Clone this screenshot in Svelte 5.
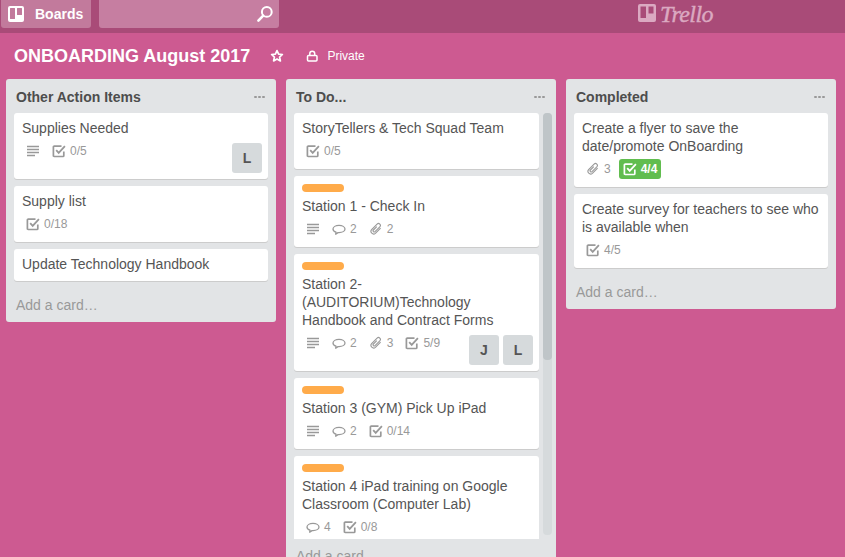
<script>
  const lists = [
    {
      title: "Other Action Items",
      cards: [
        { title: "Supplies Needed", desc: true, check: "0/5", members: ["L"] },
        { title: "Supply list", check: "0/18" },
        { title: "Update Technology Handbook" }
      ]
    },
    {
      title: "To Do...",
      scroll: true,
      cards: [
        { title: "StoryTellers & Tech Squad Team", check: "0/5" },
        { title: "Station 1 - Check In", label: true, desc: true, comments: 2, attach: 2 },
        { title: "Station 2- (AUDITORIUM)Technology Handbook and Contract Forms", label: true, desc: true, comments: 2, attach: 3, check: "5/9", members: ["J", "L"] },
        { title: "Station 3 (GYM) Pick Up iPad", label: true, desc: true, comments: 2, check: "0/14" },
        { title: "Station 4 iPad training on Google Classroom (Computer Lab)", label: true, comments: 4, check: "0/8" }
      ]
    },
    {
      title: "Completed",
      cards: [
        { title: "Create a flyer to save the date/promote OnBoarding", attach: 3, check: "4/4", done: true },
        { title: "Create survey for teachers to see who is available when", check: "4/5" }
      ]
    }
  ];
</script>

{#snippet checkIcon()}
  <svg class="icon" viewBox="0 0 14 14" width="14" height="14">
    <path d="M11.800 7.500v4.200a.8.8 0 0 1-.8.8H2.200a.8.8 0 0 1-.8-.8V3a.8.8 0 0 1 .8-.8h7.300" fill="none" stroke="currentColor" stroke-width="1.700" />
    <path d="M4.200 6.200l2.500 2.700 6.200-6.700" fill="none" stroke="currentColor" stroke-width="1.800" />
  </svg>
{/snippet}

{#snippet clipIcon()}
  <svg class="icon" viewBox="0 0 14 14" width="14" height="14">
    <path d="M7.800 4.600L4.400 8a1.100 1.100 0 0 0 1.600 1.600L10.800 4.800a1.900 1.900 0 0 0-2.700-2.700L2.600 7.600a2.700 2.700 0 0 0 3.800 3.800L11.600 6.200" fill="none" stroke="currentColor" stroke-width="1.100" />
  </svg>
{/snippet}

<div class="page">
  <header class="topbar">
    <button class="boards">
      <svg viewBox="0 0 16 16" width="16" height="16">
        <path fill-rule="evenodd" d="M2 0h12a2 2 0 0 1 2 2v12a2 2 0 0 1-2 2H2a2 2 0 0 1-2-2V2a2 2 0 0 1 2-2zm.5 2a.5.5 0 0 0-.5.5v10a.5.5 0 0 0 .5.5h4a.5.5 0 0 0 .5-.5v-10a.5.5 0 0 0-.5-.5zm7 0a.5.5 0 0 0-.5.5v6a.5.5 0 0 0 .5.5h4a.5.5 0 0 0 .5-.5v-6a.5.5 0 0 0-.5-.5z" fill="#fff" />
      </svg>
      <span>Boards</span>
    </button>
    <div class="search">
      <svg viewBox="0 0 18 18" width="18" height="18">
        <circle cx="10.800" cy="6.900" r="4.900" fill="none" stroke="#fff" stroke-width="2" />
        <path d="M7.200 10.600L2.400 15.600" stroke="#fff" stroke-width="2.600" stroke-linecap="round" />
      </svg>
    </div>
    <div class="logo">
      <svg viewBox="0 0 18 18" width="18" height="18">
        <path fill-rule="evenodd" d="M2 0h14a2 2 0 0 1 2 2v14a2 2 0 0 1-2 2H2a2 2 0 0 1-2-2V2a2 2 0 0 1 2-2zm.5 2.500v11.500h5.500V2.500zm8 0v7h5V2.500z" fill="currentColor" />
      </svg>
      <span>Trello</span>
    </div>
  </header>

  <div class="boardhead">
    <h1>ONBOARDING August 2017</h1>
    <svg class="star" viewBox="0 0 14 14" width="14" height="14">
      <path d="M7 1.600l1.600 3.500 3.800.4-2.800 2.600.8 3.800L7 10l-3.400 1.900.8-3.800L1.600 5.500l3.800-.4z" fill="none" stroke="#fff" stroke-width="1.700" stroke-linejoin="round" />
    </svg>
    <svg class="lock" viewBox="0 0 14 14" width="14" height="14">
      <rect x="3.500" y="6.500" width="9.500" height="5.500" rx="1" fill="none" stroke="#fff" stroke-width="1.500" />
      <path d="M5.800 6.500V4.600a2.400 2.400 0 0 1 4.900 0V6.500" fill="none" stroke="#fff" stroke-width="1.500" />
    </svg>
    <span class="private">Private</span>
  </div>

  <main class="board">
    {#each lists as list}
      <section class="list" class:tall={list.scroll}>
        <div class="listhead">
          <h2>{list.title}</h2>
          <span class="dots"><i></i><i></i><i></i></span>
        </div>
        <div class="cards" class:scroll={list.scroll}>
          {#each list.cards as card}
            <article class="card">
              {#if card.label}<div class="label"></div>{/if}
              <div class="title">{card.title}</div>
              {#if card.desc || card.check || card.attach || card.comments || card.members}
                <div class="foot">
                  <div class="badges">
                    {#if card.desc}
                      <span class="badge">
                        <svg class="icon" viewBox="0 0 14 14" width="14" height="14">
                          <path d="M1 2.500h12M1 5.500h12M1 8.500h12M1 11.500h8" stroke="currentColor" stroke-width="1.400" />
                        </svg>
                      </span>
                    {/if}
                    {#if card.comments}
                      <span class="badge">
                        <svg class="icon" viewBox="0 0 14 14" width="14" height="14">
                          <path d="M4 10.200C2.300 9.700 1 8.500 1 7c0-2 2.600-3.600 6-3.600S13 5 13 7s-2.600 3.600-6 3.600c-.4 0-.7 0-1 0L3.700 12.200z" fill="none" stroke="currentColor" stroke-width="1.300" stroke-linejoin="round" />
                        </svg>
                        {card.comments}
                      </span>
                    {/if}
                    {#if card.attach}
                      <span class="badge">{@render clipIcon()}{card.attach}</span>
                    {/if}
                    {#if card.check}
                      <span class="badge" class:done={card.done}>{@render checkIcon()}{card.check}</span>
                    {/if}
                  </div>
                  {#if card.members}
                    <div class="members">
                      {#each card.members as m}<span class="member">{m}</span>{/each}
                    </div>
                  {/if}
                </div>
              {/if}
            </article>
          {/each}
        </div>
        <div class="addcard">Add a card…</div>
      </section>
    {/each}
  </main>
</div>

<style>
  :global(body) {
    margin: 0;
    background: #cd5a91;
    overflow: hidden;
  }
  .page {
    width: 845px;
    height: 557px;
    overflow: hidden;
    font-family: "Liberation Sans", Arial, sans-serif;
    font-size: 14px;
    line-height: 18px;
    color: #555;
    background: #cd5a91;
  }
  .topbar {
    height: 33px;
    box-sizing: border-box;
    background: #a94b78;
    display: flex;
    align-items: flex-start;
    padding-left: 1px;
    position: relative;
  }
  .boards {
    width: 90px;
    height: 28px;
    border: 0;
    border-radius: 0 0 3px 3px;
    background: #c27a9c;
    display: flex;
    align-items: center;
    padding: 0 0 0 7px;
    font: bold 14px "Liberation Sans", Arial, sans-serif;
    color: #fff;
  }
  .boards span {
    margin-left: 11px;
  }
  .search {
    width: 180px;
    height: 28px;
    margin-left: 8px;
    border-radius: 0 0 3px 3px;
    background: #c67ea1;
    display: flex;
    align-items: center;
    justify-content: flex-end;
    padding-right: 5px;
    box-sizing: border-box;
  }
  .logo {
    position: absolute;
    left: 638px;
    top: 4px;
    height: 18px;
    display: flex;
    align-items: center;
    gap: 4px;
    color: #dba9c1;
  }
  .logo span {
    margin-top: 2px;
    font: italic 24px/24px "Liberation Serif", serif;
    letter-spacing: -0.600px;
    -webkit-text-stroke: 0.4px #dba9c1;
  }
  .boardhead {
    height: 46px;
    display: flex;
    align-items: center;
    padding-left: 14px;
    color: #fff;
  }
  h1 {
    margin: 0;
    font-size: 18px;
    line-height: 22px;
    font-weight: bold;
  }
  .star {
    margin-left: 20px;
  }
  .lock {
    margin-left: 20px;
  }
  .private {
    margin-left: 9px;
    font-size: 12px;
  }
  .board {
    display: flex;
    align-items: flex-start;
    gap: 10px;
    padding-left: 6px;
  }
  .list {
    width: 270px;
    flex: none;
    background: #e2e4e6;
    border-radius: 3px;
    padding: 0 0 0 8px;
    box-sizing: border-box;
  }
  .listhead {
    height: 34px;
    box-sizing: border-box;
    padding: 1px 11px 0 2px;
    display: flex;
    align-items: center;
    justify-content: space-between;
  }
  h2 {
    margin: 0;
    font-size: 14px;
    line-height: 18px;
    font-weight: bold;
    color: #4d4d4d;
  }
  .dots {
    display: flex;
    gap: 1px;
  }
  .dots i {
    width: 3px;
    height: 2px;
    background: #999;
    border-radius: 1px;
  }
  .cards {
    width: 254px;
    display: flex;
    flex-direction: column;
    gap: 7px;
  }
  .cards.scroll {
    width: 258px;
    height: 426px;
    overflow: hidden;
    box-sizing: border-box;
    padding-right: 13px;
    position: relative;
  }
  .cards.scroll::before {
    content: "";
    position: absolute;
    right: 0;
    top: 0;
    width: 9px;
    height: 422px;
    border-radius: 4px;
    background: #d6dadc;
  }
  .cards.scroll::after {
    content: "";
    position: absolute;
    right: 0;
    top: 0;
    width: 9px;
    height: 247px;
    border-radius: 4px;
    background: #bfc5c8;
  }
  .card {
    flex: none;
    background: #fff;
    border-radius: 3px;
    box-shadow: 0 1px 0 #ccc;
    padding: 6px 8px 4px;
  }
  .label {
    width: 42px;
    height: 8px;
    border-radius: 4px;
    background: #ffab4a;
    margin: 2px 0 5px;
  }
  .title {
    margin-bottom: 4px;
    word-break: break-word;
  }
  .foot {
    display: flex;
    justify-content: space-between;
    align-items: flex-start;
  }
  .badges {
    display: flex;
    flex-wrap: wrap;
    margin-bottom: 4px;
  }
  .badge {
    height: 20px;
    display: flex;
    align-items: center;
    gap: 4px;
    padding: 0 2px;
    margin-right: 8px;
    font-size: 12px;
    line-height: 20px;
    color: #999;
    white-space: nowrap;
  }
  .badges .badge:first-child {
    margin-left: 2px;
  }
  .icon {
    display: block;
    color: #999;
    flex: none;
  }
  .badge.done {
    background: #61bd4f;
    color: #fff;
    font-weight: bold;
    border-radius: 3px;
    padding: 0 4px;
    margin-left: -2px;
  }
  .badge.done .icon {
    color: #fff;
  }
  .members {
    display: flex;
    gap: 4px;
    margin: 2px -2px 2px 0;
  }
  .member {
    width: 30px;
    height: 30px;
    border-radius: 3px;
    background: #d6dadc;
    text-align: center;
    line-height: 30px;
    font-size: 14px;
    font-weight: bold;
    color: #555;
  }
  .addcard {
    padding: 15px 2px 8px;
    color: #999;
    height: 41px;
    box-sizing: border-box;
  }
  .tall .addcard {
    padding-top: 8px;
  }
</style>
